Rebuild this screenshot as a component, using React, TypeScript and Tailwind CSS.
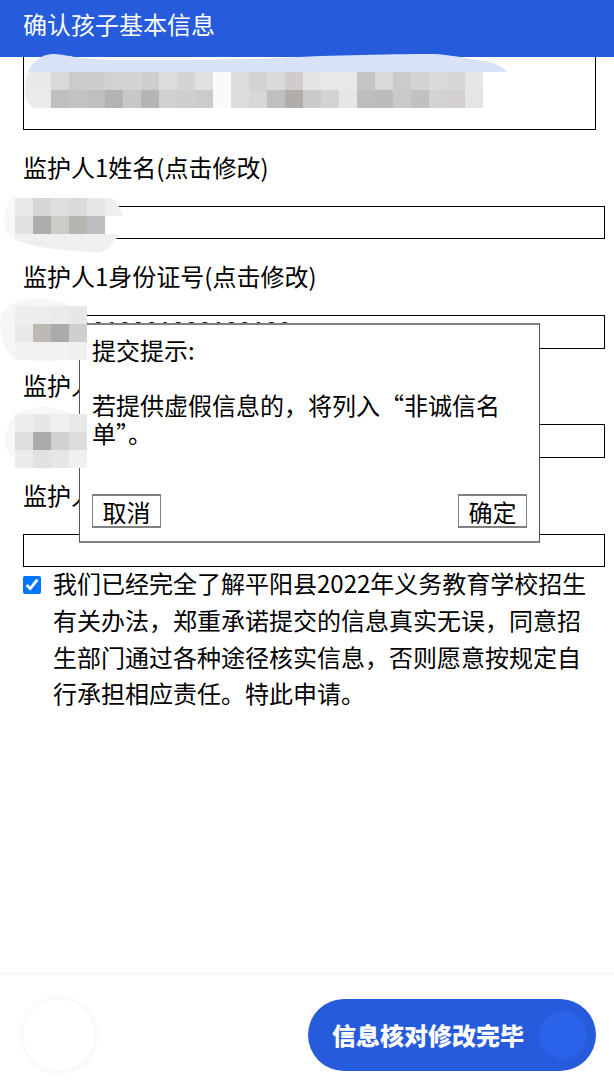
import React from "react";

const font = "font-['Noto_Sans_CJK_SC','Liberation_Sans',sans-serif]";

// fullwidth comma used in the notice texts
const COMMA = "\uFF0C";

const dialogNotice = `若提供虚假信息的${COMMA}将列入“非诚信名单”。`;
const pledge = `我们已经完全了解平阳县2022年义务教育学校招生有关办法${COMMA}郑重承诺提交的信息真实无误${COMMA}同意招生部门通过各种途径核实信息${COMMA}否则愿意按规定自行承担相应责任。特此申请。`;

interface MosaicProps {
  x: number;
  y: number;
  rows: string[][];
}

// pixelated redaction cells, 18px each
const Mosaic: React.FC<MosaicProps> = ({ x, y, rows }) => (
  <g shapeRendering="crispEdges">
    {rows.map((row, r) =>
      row.map((fill, c) => (
        <rect key={`${r}-${c}`} x={x + c * 18} y={y + r * 18} width={18} height={18} fill={fill} />
      ))
    )}
  </g>
);

const addressRows = [
  ["#e9e9e9", "#d9d9d9", "#cbcbcb", "#cdcdcb", "#d2d2d1", "#d3d4d5", "#cfcdcd", "#dcdcdc", "#d4d4d4", "#e0e0e0", "#fafafa", "#dcdcdc", "#d4d3d2", "#d9dadb", "#cfcccb", "#e3e4e6", "#e8e8e8", "#e8e8e9", "#c5c5c5", "#d9d9d7", "#cbcbcb", "#d2d3d5", "#dadada", "#d6d6d6", "#e5e6e8"],
  ["#ebeaea", "#bfbfbf", "#c4c3c2", "#bfbfbf", "#b6b2b1", "#c6c8ca", "#b7b5b3", "#d2d0ce", "#cdcfd1", "#cbcbcb", "#fafafa", "#dddddd", "#d8d7d6", "#bdbfc1", "#b1adab", "#c8cacc", "#d2d3d5", "#e6e6e6", "#bdbdbc", "#bcbcba", "#c8c9cb", "#bfc1c3", "#d3d3d3", "#d2cfce", "#e4e5e7"],
];

const nameRows = [
  ["#e8e8e8", "#d6d6d6", "#dfdfdd", "#dadada", "#e6e6e6"],
  ["#e3e2e0", "#abacae", "#cdccc8", "#b7b5b2", "#bcbec1"],
];

const idRows = [
  ["#eeeeee", "#ececec", "#ebebeb", "#e7e7e7"],
  ["#e9e9e9", "#bdb9b2", "#a8abae", "#cfcecc"],
  ["#f2f2f2", "#f1f1f1", "#f1f1f1", "#f0f0f0"],
];

const phoneRows = [
  ["#eeeeee", "#e6e7e7", "#efefef", "#e8e8e8"],
  ["#dfdede", "#aaaaab", "#cfd0cf", "#dcdcdc"],
  ["#ebebeb", "#e2e2e2", "#e6e6e6", "#f0f0f0"],
];

const Redactions: React.FC = () => (
  <svg className="absolute left-0 top-0 pointer-events-none" width={614} height={1091}>
    <path d="M28 72 C32 62 40 55 52 54 C66 54 76 59 110 60 C170 60 220 60 280 58 C330 55 400 54 436 54 C458 56 470 59 484 61 C496 63 503 67 507 72 Z" fill="#d9e3f7" />
    <path d="M33 72 H29 C26 76 25 82 25 90 C25 98 28 104 33 108 H51 V72 Z" fill="#ebebeb" />
    <Mosaic x={33} y={72} rows={addressRows} />

    <path d="M15 190 C9 198 4 208 4 220 C4 232 9 238 15 241 V198 Z" fill="#f8f8f8" />
    <path d="M105 198 H112 C117 203 121 208 123 216 H105 Z" fill="#efefef" />
    <path d="M15 234 H119 C115 242 108 250 100 252 C70 252 36 248 15 240 Z" fill="#efefef" />
    <Mosaic x={15} y={198} rows={nameRows} />

    <path d="M0 320 C2 308 12 300 30 299 C50 298 62 302 72 306 C82 310 87 322 87 336 C87 350 80 358 66 360 C48 362 24 362 12 356 C4 350 0 336 0 320 Z" fill="#f6f6f6" />
    <Mosaic x={15} y={306} rows={idRows} />

    <path d="M5 440 C6 424 16 408 40 407 C60 406 78 414 84 428 C88 442 84 458 72 464 C56 470 30 472 18 462 C10 456 5 450 5 440 Z" fill="#f7f7f7" />
    <Mosaic x={15} y={414} rows={phoneRows} />
  </svg>
);

interface FieldProps {
  label: string;
  value?: string;
}

const Field: React.FC<FieldProps> = ({ label, value }) => (
  <div className="mt-[20.67px]">
    <div className="h-9 text-2xl leading-8 text-black">{label}</div>
    <input
      readOnly
      value={value ?? ""}
      className="mt-[19px] block h-[33.67px] w-[582px] border border-black px-px pb-[6px] text-2xl leading-6 text-black outline-none"
    />
  </div>
);

const ConfirmDialog: React.FC = () => (
  <div className="absolute left-[79px] top-[323px] flex h-[220px] w-[461px] flex-col justify-between border-x border-x-[#555555] border-y-2 border-y-[#808080] bg-white px-3 pb-[13px] pt-[11px]">
    <div className="text-2xl leading-[27.5px] text-black">
      <p>提交提示:</p>
      <p className="mt-[27.5px]">{dialogNotice}</p>
    </div>
    <div className="flex justify-between">
      <button className="h-[34px] w-[69px] border-x border-y-2 border-[#808080] bg-white pt-px text-2xl leading-none text-black">
        取消
      </button>
      <button className="h-[34px] w-[69px] border-x border-y-2 border-[#808080] bg-white pt-px text-2xl leading-none text-black">
        确定
      </button>
    </div>
  </div>
);

export default function App() {
  return (
    <div className={`${font} relative flex h-[1091px] w-[614px] flex-col overflow-hidden bg-white`}>
      <header className="flex h-[57px] shrink-0 items-center bg-[#265bdc] pb-[10px] pl-[23px] text-2xl text-white">
        确认孩子基本信息
      </header>

      <main className="flex-1 pl-[23px]">
        <div className="h-[73px] w-[573px] border-x border-b border-black" />
        <Field label="监护人1姓名(点击修改)" />
        <Field label="监护人1身份证号(点击修改)" value="00000010001000100100" />
        <Field label="监护人2姓名(点击修改)" />
        <Field label="监护人2身份证号(点击修改)" />
        <label className="flex w-[573px] items-start">
          <input type="checkbox" defaultChecked className="mt-[9px] h-[18px] w-[18px] shrink-0 accent-[#0075ff]" />
          <span className="-mt-[2px] ml-3 text-2xl leading-[36.67px] text-black">{pledge}</span>
        </label>
      </main>

      <footer className="flex h-[116px] shrink-0 items-start justify-between bg-white pl-[23px] pr-[18px] pt-6 shadow-[0_-1px_5px_rgba(0,0,0,0.08)]">
        <div className="h-[72px] w-[72px] rounded-full bg-white shadow-[0_0_6px_rgba(0,0,0,0.08)]" />
        <button className="flex h-[72px] w-[288px] items-center justify-between rounded-full bg-[#265bdc] pl-6 pr-[9px] text-2xl font-black text-white">
          信息核对修改完毕
          <span className="h-12 w-12 rounded-full bg-[#2a62e8]" />
        </button>
      </footer>

      <ConfirmDialog />
      <Redactions />
    </div>
  );
}
